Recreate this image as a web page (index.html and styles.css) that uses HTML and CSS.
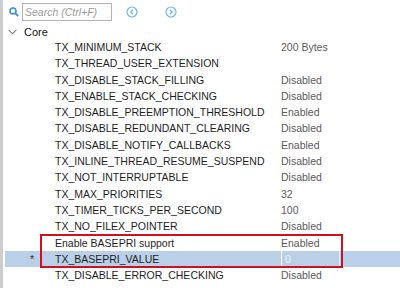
FILE: index.html
```html
<!DOCTYPE html>
<html lang="en">
<head>
    <meta charset="UTF-8">
    <meta name="viewport" content="width=device-width, initial-scale=1.0">
    <title>Parameter Settings</title>
    <link rel="stylesheet" href="styles.css">
</head>
<body>

    <div class="panel">
        <div class="toolbar">
            <svg class="search-icon" width="10" height="10" viewBox="0 0 10 10">
                <circle cx="4" cy="4" r="3" fill="none" stroke="#3b8fd6" stroke-width="1.6"/>
                <line x1="6.2" y1="6.2" x2="9.2" y2="9.2" stroke="#3b8fd6" stroke-width="1.8"/>
            </svg>
            <input class="search" type="text" placeholder="Search (Ctrl+F)">
            <svg class="nav-btn" width="12" height="12" viewBox="0 0 12 12">
                <circle cx="6" cy="6" r="5" fill="none" stroke="#6cb6ec" stroke-width="1.2"/>
                <polyline points="7,3.8 4.8,6 7,8.2" fill="none" stroke="#6cb6ec" stroke-width="1.3"/>
            </svg>
            <svg class="nav-btn" width="12" height="12" viewBox="0 0 12 12">
                <circle cx="6" cy="6" r="5" fill="none" stroke="#6cb6ec" stroke-width="1.2"/>
                <polyline points="5,3.8 7.2,6 5,8.2" fill="none" stroke="#6cb6ec" stroke-width="1.3"/>
            </svg>
        </div>

        <div class="group">
            <svg class="chevron" width="9" height="6" viewBox="0 0 9 6">
                <polyline points="0.5,0.8 4.5,4.8 8.5,0.8" fill="none" stroke="#555" stroke-width="1"/>
            </svg>
            <span>Core</span>
        </div>

        <div class="row"><span></span><span class="name">TX_MINIMUM_STACK</span><span class="value">200 Bytes</span></div>
        <div class="row"><span></span><span class="name">TX_THREAD_USER_EXTENSION</span><span class="value"></span></div>
        <div class="row"><span></span><span class="name">TX_DISABLE_STACK_FILLING</span><span class="value">Disabled</span></div>
        <div class="row"><span></span><span class="name">TX_ENABLE_STACK_CHECKING</span><span class="value">Disabled</span></div>
        <div class="row"><span></span><span class="name">TX_DISABLE_PREEMPTION_THRESHOLD</span><span class="value">Enabled</span></div>
        <div class="row"><span></span><span class="name">TX_DISABLE_REDUNDANT_CLEARING</span><span class="value">Disabled</span></div>
        <div class="row"><span></span><span class="name">TX_DISABLE_NOTIFY_CALLBACKS</span><span class="value">Enabled</span></div>
        <div class="row"><span></span><span class="name">TX_INLINE_THREAD_RESUME_SUSPEND</span><span class="value">Disabled</span></div>
        <div class="row"><span></span><span class="name">TX_NOT_INTERRUPTABLE</span><span class="value">Disabled</span></div>
        <div class="row"><span></span><span class="name">TX_MAX_PRIORITIES</span><span class="value">32</span></div>
        <div class="row"><span></span><span class="name">TX_TIMER_TICKS_PER_SECOND</span><span class="value">100</span></div>
        <div class="row"><span></span><span class="name">TX_NO_FILEX_POINTER</span><span class="value">Disabled</span></div>

        <div class="marked">
            <div class="row"><span></span><span class="name">Enable BASEPRI support</span><span class="value">Enabled</span></div>
            <div class="row selected"><span class="mark">*</span><span class="name">TX_BASEPRI_VALUE</span><span class="value edit">0</span></div>
        </div>

        <div class="row"><span></span><span class="name">TX_DISABLE_ERROR_CHECKING</span><span class="value">Disabled</span></div>
    </div>

</body>
</html>
```

FILE: styles.css
```css
body {
    margin: 0;
    background-color: #fff;
    font-family: "Liberation Sans", Arial, sans-serif;
    font-size: 10.5px;
    color: #222;
    overflow: hidden;
}

.panel {
    border-left: 3px solid #cdcdcd;
    height: 288px;
    box-sizing: border-box;
}

.toolbar {
    display: flex;
    align-items: center;
    height: 24px;
    padding-left: 6px;
}

.search-icon {
    margin-right: 3px;
}

.search {
    width: 90px;
    height: 18px;
    box-sizing: border-box;
    border: 1px solid #b4b4b4;
    padding: 0 2px;
    font-family: "Liberation Sans", Arial, sans-serif;
    font-size: 10.5px;
    font-style: italic;
    margin-right: 14px;
}

.search::placeholder {
    color: #9a9a9a;
}

.nav-btn {
    margin-right: 27px;
}

.group {
    display: flex;
    align-items: center;
    height: 15px;
    padding-left: 5px;
    font-size: 11px;
    color: #111;
}

.chevron {
    margin-right: 7px;
}

.row {
    display: grid;
    grid-template-columns: 52px 226px 1fr;
    height: 16.3px;
    line-height: 16.3px;
    white-space: nowrap;
}

.name {
    color: #1e1e1e;
}

.value {
    color: #5a5a5a;
}

.mark {
    text-align: right;
    color: #333;
}

.marked {
    position: relative;
}

.marked::after {
    content: "";
    position: absolute;
    left: 37px;
    width: 299px;
    top: -1px;
    bottom: -1px;
    border: 2px solid #d0101c;
}

.selected {
    background-color: #b9d0e8;
    margin-left: 2px;
}

.selected .mark {
    padding-right: 23px;
}

.selected .name {
    margin-left: -2px;
}

.edit {
    color: #eef4fa;
    border-left: 1px solid #fff;
    border-right: 1px solid #d8f0f8;
    margin-left: -2px;
    padding-left: 3px;
    width: 54px;
}
```
